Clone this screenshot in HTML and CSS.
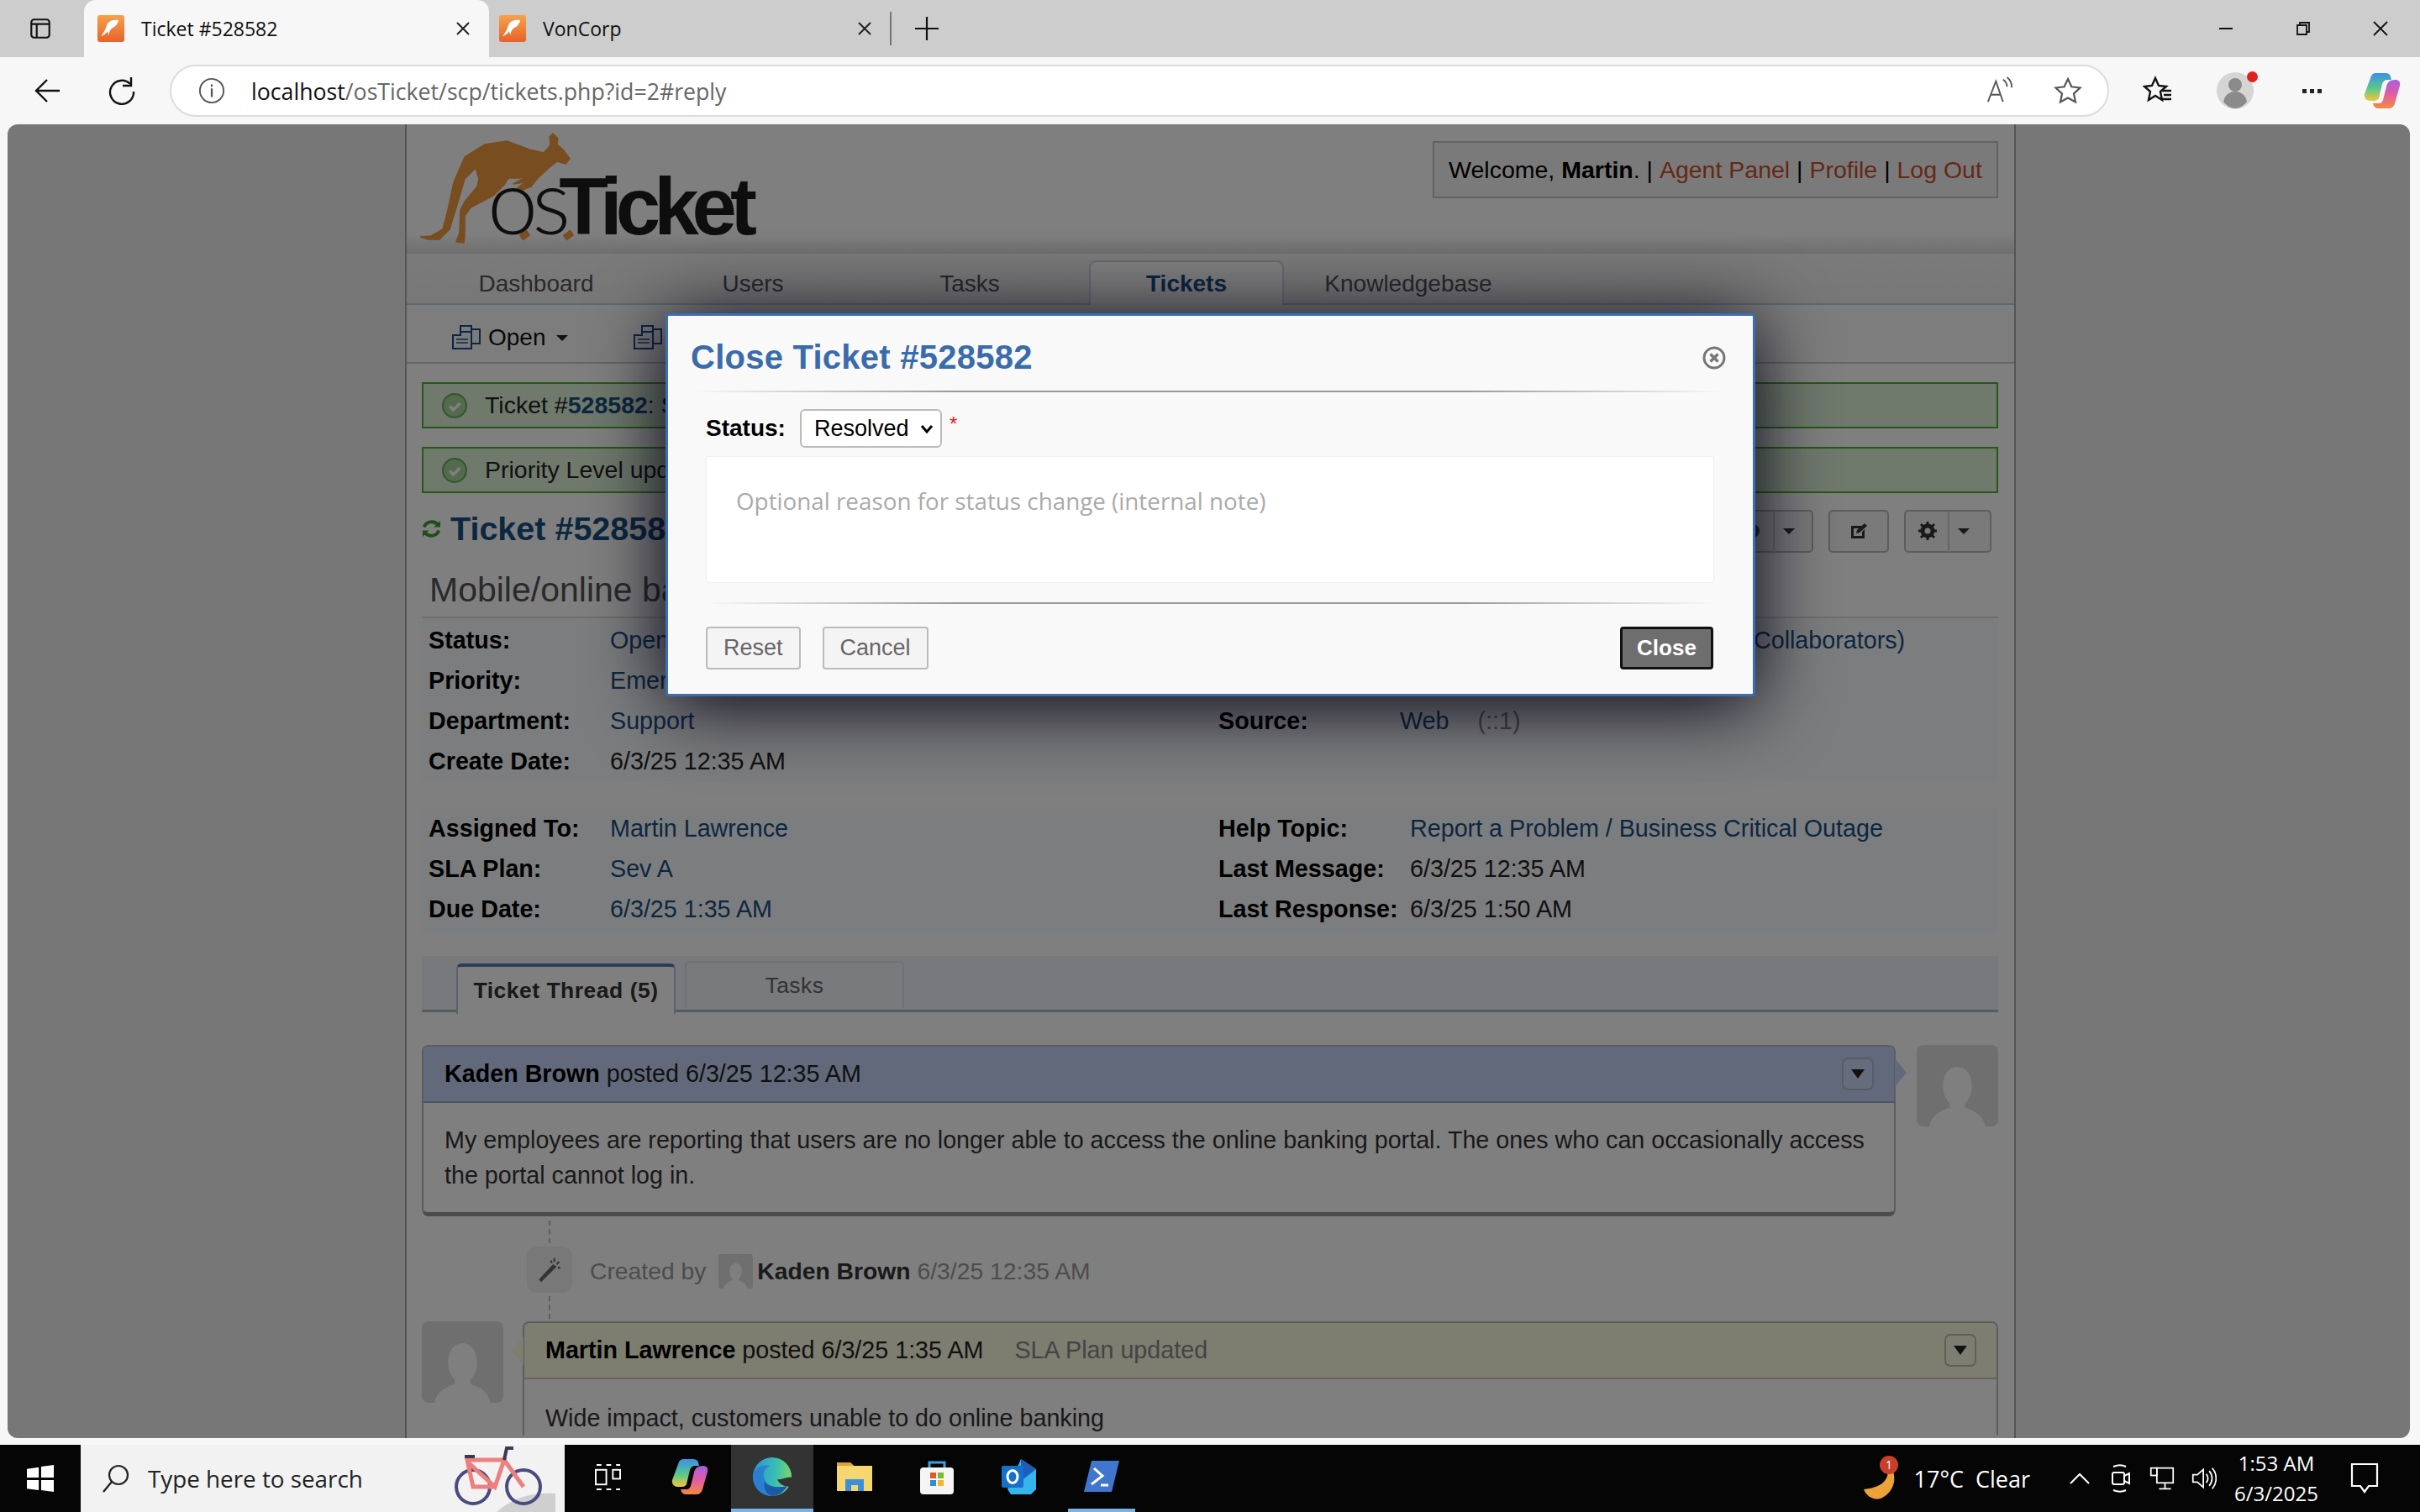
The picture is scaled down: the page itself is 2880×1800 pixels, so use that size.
FILE: index.html
```html
<!doctype html>
<html lang="en">
<head>
    <meta charset="utf-8">
    <title>Ticket #528582</title>
    <link rel="stylesheet" href="styles.css">
</head>
<body>
<svg width="0" height="0" class="defs">
    <defs>
        <linearGradient id="fav-grad" x1="0" y1="0" x2="0" y2="1"><stop offset="0" stop-color="#f5a24c"/><stop offset="1" stop-color="#e6622b"/></linearGradient>
        <linearGradient id="copilot-a" x1="0" y1="0" x2="0" y2="1"><stop offset="0" stop-color="#3a8fe8"/><stop offset=".55" stop-color="#58c98a"/><stop offset="1" stop-color="#f4c53c"/></linearGradient>
        <linearGradient id="copilot-b" x1="0" y1="0" x2="0" y2="1"><stop offset="0" stop-color="#a65fe0"/><stop offset=".5" stop-color="#e25ca6"/><stop offset="1" stop-color="#f48a3c"/></linearGradient>
        <linearGradient id="edge-grad" x1="0" y1=".4" x2="1" y2=".5"><stop offset="0" stop-color="#2b95d6"/><stop offset=".6" stop-color="#3cc0b0"/><stop offset="1" stop-color="#7dd765"/></linearGradient>
        <symbol id="favicon" viewBox="0 0 32 32">
            <rect width="32" height="32" rx="3" fill="url(#fav-grad)"/>
            <path d="M25 6c-5-1-10 0-13 4-2 4-3 10-8 15 4-1 6-3 8-6l1 5c1-4 2-7 5-9 2-1 4-2 5-4 1-2 2-3 2-5z" fill="#fff"/>
        </symbol>
        <symbol id="copilot" viewBox="0 0 44 44">
            <path d="M14 1h12c3 0 5 1 6 4l1 4h-5c-3 0-5 2-6 5l-4 17c-1 2-3 3-5 3H7C3 34 0 30 1 26L8 7c1-4 3-6 6-6z" fill="url(#copilot-a)"/>
            <path d="M38 9c4 0 6 3 5 7l-6 21c-1 4-4 6-7 6H17c-3 0-5-2-6-6h7c3 0 4-2 5-4l4-16c1-5 4-8 11-8z" fill="url(#copilot-b)"/>
        </symbol>
        <symbol id="tab-x" viewBox="0 0 20 20"><path d="M3 3l14 14M17 3L3 17" stroke="#222" stroke-width="2" fill="none"/></symbol>
        <symbol id="doc-stack" viewBox="0 0 34 30">
            <path d="M10 8h13v20H1V12h9zM10 8V1h13v7M23 5h10v17H23" fill="#f4f7fa" stroke="#1d4f82" stroke-width="2"/>
            <path d="M5 17h14M5 21h14" stroke="#1d4f82" stroke-width="1.5"/>
        </symbol>
        <symbol id="check-round" viewBox="0 0 30 30">
            <circle cx="15" cy="15" r="14" fill="#a7d59b" stroke="#62ad55" stroke-width="2"/>
            <path d="M9 15.5l4.500 4.500 8-8" fill="none" stroke="#fff" stroke-width="3.500"/>
        </symbol>
        <symbol id="person" viewBox="0 0 96 96">
            <rect width="96" height="96" rx="8" fill="#dedede"/>
            <path d="M48 26c-11 0-17 10-17 23 0 9 4 16 8 20v5c-10 3-21 8-24 22h66c-3-14-14-19-24-22v-5c4-4 8-11 8-20 0-13-6-23-17-23z" fill="#fff"/>
        </symbol>
    </defs>
</svg>

<div class="screen">
    <div class="tab-strip">
        <svg class="sidebar-icon" viewBox="0 0 28 28"><rect x="4" y="4" width="20" height="20" rx="3" fill="none" stroke="#111" stroke-width="2"/><path d="M4 9h20M10 9v15" stroke="#111" stroke-width="2"/></svg>
        <div class="tab tab-active">
            <svg class="favicon"><use href="#favicon"/></svg>
            <span class="tab-title">Ticket #528582</span>
            <svg class="tab-close"><use href="#tab-x"/></svg>
        </div>
        <div class="tab">
            <svg class="favicon"><use href="#favicon"/></svg>
            <span class="tab-title">VonCorp</span>
            <svg class="tab-close"><use href="#tab-x"/></svg>
        </div>
        <div class="tab-divider"></div>
        <svg class="new-tab" viewBox="0 0 30 30"><path d="M15 1v28M1 15h28" stroke="#111" stroke-width="2.200"/></svg>
        <div class="window-controls">
            <svg viewBox="0 0 20 20"><path d="M2 10h16" stroke="#111" stroke-width="2"/></svg>
            <svg viewBox="0 0 20 20"><path d="M3 6h11v11H3zM6 6V3h11v11h-3" fill="none" stroke="#111" stroke-width="1.800"/></svg>
            <svg viewBox="0 0 20 20"><path d="M2 2l16 16M18 2L2 18" stroke="#111" stroke-width="1.800"/></svg>
        </div>
    </div>

    <div class="toolbar">
        <svg class="back-icon" viewBox="0 0 34 34"><path d="M31 17H4M16 4L3 17l13 13" fill="none" stroke="#111" stroke-width="2.400"/></svg>
        <svg class="reload-icon" viewBox="0 0 34 34"><path d="M27 9a14 14 0 1 0 4 9" fill="none" stroke="#111" stroke-width="2.400"/><path d="M28 1v10H18" fill="none" stroke="#111" stroke-width="2.400"/></svg>
        <div class="address-bar">
            <svg class="info-icon" viewBox="0 0 34 34"><circle cx="17" cy="17" r="15" fill="none" stroke="#555" stroke-width="2"/><path d="M17 14v11M17 9v3" stroke="#555" stroke-width="2.400"/></svg>
            <span class="url"><b>localhost</b>/osTicket/scp/tickets.php?id=2#reply</span>
            <svg class="read-icon" viewBox="0 0 36 36"><path d="M3 32L13 6l9 26M7 23h12" fill="none" stroke="#555" stroke-width="2"/><path d="M22 4c3 2 5 5 5 9M27 1c4 3 6 8 6 13" fill="none" stroke="#555" stroke-width="2"/></svg>
            <svg class="star-icon" viewBox="0 0 34 34"><path d="M17 3l4.300 9.300 10.200 1.200-7.500 7 2 10L17 25.500 8 30.500l2-10-7.500-7 10.200-1.200z" fill="none" stroke="#555" stroke-width="2.200"/></svg>
        </div>
        <svg class="fav-list" viewBox="0 0 36 36"><path d="M15 3l4 9 9 1-7 6 2 10-8-5-8 5 2-10-7-6 9-1z" fill="none" stroke="#111" stroke-width="2.400"/><path d="M23 18h11M25 23h9M23 28h11" stroke="#111" stroke-width="2.400"/></svg>
        <div class="profile">
            <svg viewBox="0 0 46 46"><circle cx="23" cy="23" r="22" fill="#d5d5d5"/><circle cx="23" cy="16" r="8" fill="#8a8a8a"/><path d="M9 36c2-9 8-12 14-12s12 3 14 12c-4 5-9 8-14 8s-10-3-14-8z" fill="#8a8a8a"/></svg>
            <span class="profile-dot"></span>
        </div>
        <div class="more-dots"><i></i><i></i><i></i></div>
        <svg class="copilot-small"><use href="#copilot"/></svg>
    </div>

    <div class="viewport">
        <div class="page-panel">
            <div class="header-panel">
                <div class="logo">
                    <svg class="kangaroo" viewBox="0 0 180 136"><path d="M158 1L164 7 163 14 170 20 178 31 173 37 163 34 153 42 140 54 132 64 122 68 114 68 118 64 127 57 118 60 111 61 120 56 128 52 118 54 105 54 100 62 87 75 60 89 53 99 53 122 52 131 43 130 47 119 48 92 53 82 68 64 70 55 66 42 53 55 43 89 35 115 23 127 10 127 0 124 13 123 27 115 33 92 40 59 53 29 77 14 103 10 130 20 147 24 155 15 154 5Z" fill="#f19a3e" stroke="#f19a3e" stroke-width="1.500" stroke-linejoin="round"/></svg>
                    <span class="logo-text"><span class="logo-os">os</span><b>Ticket</b></span>
                    <i class="logo-mark logo-mark-o"></i>
                    <i class="logo-mark logo-mark-s"></i>
                </div>
                <div class="welcome-box">Welcome, <b>Martin</b>. | <a>Agent Panel</a> | <a>Profile</a> | <a>Log Out</a></div>
            </div>

            <div class="nav-panel">
                <a class="nav-item">Dashboard</a>
                <a class="nav-item">Users</a>
                <a class="nav-item">Tasks</a>
                <a class="nav-item nav-active">Tickets</a>
                <a class="nav-item nav-wide">Knowledgebase</a>
            </div>

            <div class="subnav-panel">
                <span class="subnav-item"><svg class="doc-icon"><use href="#doc-stack"/></svg>Open<i class="caret"></i></span>
                <span class="subnav-item"><svg class="doc-icon"><use href="#doc-stack"/></svg>My Tickets<i class="caret"></i></span>
            </div>

            <div class="content-panel">
                <div class="alert"><svg class="check-icon"><use href="#check-round"/></svg><span>Ticket #<b>528582</b>: Status changed</span></div>
                <div class="alert"><svg class="check-icon"><use href="#check-round"/></svg><span>Priority Level updated successfully</span></div>

                <div class="title-row">
                    <svg class="refresh-icon" viewBox="0 0 24 24"><path d="M3 10C5 3 15 1 20 7M21 14c-2 7-12 9-17 3" fill="none" stroke="#3c9a2a" stroke-width="4"/><path d="M23 2v8h-8zM1 22v-8h8z" fill="#3c9a2a"/></svg>
                    <h1 class="ticket-title">Ticket #528582</h1>
                    <div class="action-buttons">
                        <span class="action-btn action-split"><svg viewBox="0 0 24 24"><circle cx="12" cy="12" r="8" fill="#555"/></svg><i class="action-sep"></i><i class="caret"></i></span>
                        <span class="action-btn action-edit"><svg viewBox="0 0 24 24"><path d="M3 6h12v3H6v9h10v-5l3-3v11H3z" fill="#333"/><path d="M9 15l1-4 9-8 3 3-9 8z" fill="#333"/></svg></span>
                        <span class="action-btn action-gear"><svg viewBox="0 0 24 24"><circle cx="12" cy="12" r="6" fill="none" stroke="#333" stroke-width="5"/><path d="M12 1v5M12 18v5M1 12h5M18 12h5M4 4l4 4M16 16l4 4M20 4l-4 4M8 16l-4 4" stroke="#333" stroke-width="3"/></svg><i class="action-sep"></i><i class="caret"></i></span>
                    </div>
                </div>
                <h2 class="subject">Mobile/online banking down</h2>

                <div class="info-group info-first">
                    <div class="info-column">
                        <div class="info-row"><b>Status:</b><a>Open</a></div>
                        <div class="info-row"><b>Priority:</b><a>Emergency</a></div>
                        <div class="info-row"><b>Department:</b><a>Support</a></div>
                        <div class="info-row"><b>Create Date:</b><span>6/3/25 12:35 AM</span></div>
                    </div>
                    <div class="info-column">
                        <div class="info-row"><b>User:</b><a>Kaden Brown&nbsp;&nbsp;&nbsp;&nbsp;(1 User, 0 Active Collaborators)</a></div>
                        <div class="info-row"><b>Email:</b><span>kaden.brown@voncorp.com</span></div>
                        <div class="info-row"><b>Source:</b><a>Web</a><span class="source-ip">(::1)</span></div>
                    </div>
                </div>

                <div class="info-group info-second">
                    <div class="info-column">
                        <div class="info-row"><b>Assigned To:</b><a>Martin Lawrence</a></div>
                        <div class="info-row"><b>SLA Plan:</b><a>Sev A</a></div>
                        <div class="info-row"><b>Due Date:</b><a>6/3/25 1:35 AM</a></div>
                    </div>
                    <div class="info-column">
                        <div class="info-row"><b>Help Topic:</b><a>Report a Problem / Business Critical Outage</a></div>
                        <div class="info-row"><b>Last Message:</b><span>6/3/25 12:35 AM</span></div>
                        <div class="info-row"><b>Last Response:</b><span>6/3/25 1:50 AM</span></div>
                    </div>
                </div>

                <div class="tabs-panel">
                    <div class="thread-tab thread-tab-active">Ticket Thread (5)</div>
                    <div class="thread-tab">Tasks</div>
                </div>

                <div class="thread-entry">
                    <div class="entry-box entry-message">
                        <div class="entry-header"><span><b>Kaden Brown</b> posted 6/3/25 12:35 AM</span><span class="entry-menu"><i></i></span></div>
                        <div class="entry-body">My employees are reporting that users are no longer able to access the online banking portal. The ones who can occasionally access the portal cannot log in.</div>
                    </div>
                    <svg class="avatar"><use href="#person"/></svg>
                </div>

                <div class="event-row">
                    <div class="event-rail">
                        <i class="rail-dots"></i>
                        <span class="event-icon"><svg viewBox="0 0 24 24"><path d="M5 22l-2-2L15 7l3 2z" fill="#666"/><path d="M16 2v3M20 5l-2 2M13 4l1 2M21 10h-2" stroke="#666" stroke-width="1.500"/></svg></span>
                        <i class="rail-dots"></i>
                    </div>
                    <div class="event-text">Created by <svg class="mini-avatar"><use href="#person"/></svg><b>Kaden Brown</b> 6/3/25 12:35 AM</div>
                </div>

                <div class="thread-entry">
                    <svg class="avatar"><use href="#person"/></svg>
                    <div class="entry-box entry-response">
                        <div class="entry-header"><span><b>Martin Lawrence</b> posted 6/3/25 1:35 AM <span class="entry-note">SLA Plan updated</span></span><span class="entry-menu"><i></i></span></div>
                        <div class="entry-body">Wide impact, customers unable to do online banking</div>
                    </div>
                </div>
            </div>
        </div>

        <div class="overlay"></div>
        <div class="modal">
            <div class="modal-head">
                <h3>Close Ticket #528582</h3>
                <svg class="modal-close" viewBox="0 0 30 30"><circle cx="15" cy="15" r="12" fill="none" stroke="#777" stroke-width="3"/><path d="M10.500 10.500l9 9M19.500 10.500l-9 9" stroke="#777" stroke-width="3.500"/></svg>
            </div>
            <div class="fade-rule"></div>
            <div class="modal-body">
                <div class="status-row">
                    <label>Status:</label>
                    <div class="select-wrap">
                        <select class="status-select"><option>Resolved</option></select>
                        <svg class="select-chevron" viewBox="0 0 16 12"><path d="M2 2l6 7 6-7" fill="none" stroke="#000" stroke-width="3"/></svg>
                    </div>
                    <span class="required">*</span>
                </div>
                <textarea class="reason-box" placeholder="Optional reason for status change (internal note)"></textarea>
                <div class="fade-rule rule-second"></div>
                <div class="modal-buttons">
                    <button type="button" class="btn">Reset</button>
                    <button type="button" class="btn">Cancel</button>
                    <button type="button" class="btn btn-primary">Close</button>
                </div>
            </div>
        </div>
    </div>

    <div class="bottom-gap"></div>

    <div class="taskbar">
        <svg class="start-icon" viewBox="0 0 34 34"><path d="M0 5l15-2v13H0zM18 2l16-2v16H18zM0 19h15v13L0 30zM18 19h16v15l-16-2z" fill="#fff"/></svg>
        <div class="search-box">
            <svg class="search-icon" viewBox="0 0 36 36"><circle cx="21" cy="14" r="11" fill="none" stroke="#222" stroke-width="2.200"/><path d="M13 22L3 34" stroke="#222" stroke-width="2.400"/></svg>
            <span>Type here to search</span>
            <svg class="bike" viewBox="0 0 130 80">
                <path d="M60 80C80 62 105 56 130 58v22z" fill="#cfcfcf"/>
                <circle cx="32" cy="50" r="20" fill="none" stroke="#4a4a80" stroke-width="4"/>
                <circle cx="92" cy="50" r="20" fill="none" stroke="#4a4a80" stroke-width="4"/>
                <path d="M32 50L25 18h44L58 50zM25 20l33 30 11-32 23 32" fill="none" stroke="#ee7f7f" stroke-width="5"/>
                <path d="M69 18l3-14h8M22 14h12" fill="none" stroke="#3a3a55" stroke-width="4"/>
            </svg>
        </div>
        <div class="task-icons">
            <span class="task-slot"><svg class="task-view" viewBox="0 0 34 32"><path d="M3 1h6M15 1h6M27 1h5M3 31h6M15 31h6M27 31h5" stroke="#fff" stroke-width="2"/><rect x="2" y="7" width="13" height="18" fill="none" stroke="#fff" stroke-width="2"/><rect x="23" y="7" width="9" height="11" fill="none" stroke="#fff" stroke-width="2"/></svg></span>
            <span class="task-slot"><svg><use href="#copilot"/></svg></span>
            <span class="task-slot task-running"><svg class="edge-icon" viewBox="0 0 48 48"><circle cx="24" cy="24" r="23" fill="url(#edge-grad)"/><path d="M48 25C42 23 37 28 30 27 32 32 36 36 48 36z" fill="#333"/><path d="M1 24C2 14 12 9 21 11 14 14 12 21 15 28 18 36 30 38 42 35 37 43 30 47 24 47 11 47 1 37 1 24Z" fill="#2a7fd0"/><path d="M15 29C18 36 30 38 42 35 37 43 30 47 24 47 17 45 13 37 15 29Z" fill="#1b5aa4"/></svg></span>
            <span class="task-slot"><svg viewBox="0 0 44 44"><path d="M1 5h16l4 4h22v30H1z" fill="#f6d66f"/><path d="M1 5h16l4 4H1z" fill="#d9a53a"/><path d="M11 39V25h22v14h-7v-7h-8v7z" fill="#3d8fd8"/></svg></span>
            <span class="task-slot"><svg viewBox="0 0 44 44"><path d="M13 12V5h18v7" fill="none" stroke="#3aa0e0" stroke-width="3"/><rect x="2" y="11" width="40" height="32" rx="4" fill="#f5f5f5"/><rect x="14" y="17" width="7" height="7" fill="#e8552b"/><rect x="23" y="17" width="7" height="7" fill="#7db93a"/><rect x="14" y="26" width="7" height="7" fill="#2f8ed8"/><rect x="23" y="26" width="7" height="7" fill="#f2b632"/></svg></span>
            <span class="task-slot"><svg viewBox="0 0 44 44"><path d="M24 1l18 12v24l-6 6H12l-4-6z" fill="#35b5ec"/><path d="M24 1l18 12-18 14z" fill="#1c5fb8"/><rect x="1" y="9" width="26" height="26" rx="2" fill="#1670c8"/><ellipse cx="14" cy="22" rx="6" ry="7.500" fill="none" stroke="#fff" stroke-width="3"/></svg></span>
            <span class="task-slot task-open"><svg viewBox="0 0 44 44"><path d="M10 3h33l-9 37H1z" fill="#3f76cf"/><path d="M13 12l10 9-13 10" fill="none" stroke="#fff" stroke-width="3"/><path d="M21 32h9" stroke="#fff" stroke-width="3"/></svg></span>
        </div>
        <div class="tray">
            <svg class="weather-icon" viewBox="0 0 44 54"><path d="M30 12c4 16-6 26-28 28 4 10 14 14 22 10 12-6 18-20 12-34z" fill="#eca238"/><circle cx="32" cy="11" r="11" fill="#c8402a"/><text x="32" y="16" class="weather-badge">1</text></svg>
            <span class="weather-text">17°C&nbsp; Clear</span>
            <svg class="tray-chevron" viewBox="0 0 26 16"><path d="M2 14L13 3l11 11" fill="none" stroke="#fff" stroke-width="2"/></svg>
            <svg class="tray-icon" viewBox="0 0 26 34"><path d="M5 3c5-2 11-2 15 0M5 31c5 2 11 2 15 0" fill="none" stroke="#fff" stroke-width="2"/><rect x="4" y="10" width="14" height="14" rx="2" fill="none" stroke="#fff" stroke-width="2"/><path d="M18 14l6-3v12l-6-3" fill="none" stroke="#fff" stroke-width="2"/></svg>
            <svg class="tray-icon" viewBox="0 0 34 34"><rect x="10" y="3" width="22" height="20" fill="none" stroke="#fff" stroke-width="2"/><rect x="2" y="3" width="8" height="10" fill="#000" stroke="#fff" stroke-width="2"/><path d="M21 23v7M13 31h16" stroke="#fff" stroke-width="2"/></svg>
            <svg class="tray-icon" viewBox="0 0 34 34"><path d="M2 12h6l8-7v24l-8-7H2z" fill="none" stroke="#fff" stroke-width="2"/><path d="M20 11c3 4 3 8 0 12M24 7c5 6 5 14 0 20M28 3c7 8 7 20 0 28" fill="none" stroke="#fff" stroke-width="2"/></svg>
            <div class="clock"><span>1:53 AM</span><span>6/3/2025</span></div>
            <svg class="notify-icon" viewBox="0 0 34 38"><path d="M2 2h30v26H22l-5 7-5-7H2z" fill="none" stroke="#fff" stroke-width="2.200"/></svg>
        </div>
    </div>
</div>
</body>
</html>
```

FILE: styles.css
```css
* {
    box-sizing: border-box;
}
html, body {
    margin: 0;
    padding: 0;
    background-color: #000;
}
.defs {
    display: block;
    height: 0;
}
.screen {
    width: 2880px;
    height: 1800px;
    display: flex;
    flex-direction: column;
    font-family: "Liberation Sans", Arial, sans-serif;
    background-color: #f7f7f7;
    overflow: hidden;
}

/* browser tabs */
.tab-strip {
    height: 68px;
    flex: none;
    display: flex;
    align-items: center;
    background-color: #cdcdcd;
    font-family: "Open Sans", sans-serif;
    font-size: 23px;
    color: #111;
}
.sidebar-icon {
    width: 30px;
    height: 30px;
    margin: 0 37px 0 33px;
    flex: none;
}
.tab {
    width: 482px;
    height: 68px;
    display: flex;
    align-items: center;
    padding: 0 25px 0 12px;
}
.tab-active {
    background-color: #f7f7f7;
    border-radius: 14px 14px 0 0;
    padding: 0 21px 0 16px;
}
.favicon {
    width: 32px;
    height: 32px;
    flex: none;
    margin-right: 20px;
}
.tab-title {
    flex: 1;
}
.tab-close {
    width: 20px;
    height: 20px;
    flex: none;
}
.tab-divider {
    width: 2px;
    height: 40px;
    background-color: #777;
    margin-left: -5px;
}
.new-tab {
    width: 30px;
    height: 30px;
    margin-left: 27px;
}
.window-controls {
    margin-left: auto;
    display: flex;
    gap: 72px;
    padding-right: 37px;
}
.window-controls svg {
    width: 20px;
    height: 20px;
}

/* address bar row */
.toolbar {
    height: 80px;
    flex: none;
    display: flex;
    align-items: center;
    background-color: #f7f7f7;
}
.back-icon {
    width: 34px;
    height: 34px;
    margin-left: 40px;
}
.reload-icon {
    width: 34px;
    height: 34px;
    margin-left: 54px;
}
.address-bar {
    width: 2308px;
    height: 62px;
    margin-left: 40px;
    display: flex;
    align-items: center;
    background-color: #fff;
    border: 2px solid #dcdcdc;
    border-radius: 31px;
    padding: 0 30px 0 32px;
}
.info-icon {
    width: 32px;
    height: 32px;
    margin-right: 31px;
}
.url {
    flex: 1;
    font-family: "Open Sans", sans-serif;
    font-size: 26.700px;
    color: #666;
}
.url b {
    font-weight: 400;
    color: #111;
}
.read-icon {
    width: 34px;
    height: 34px;
    margin-right: 47px;
}
.star-icon {
    width: 34px;
    height: 34px;
}
.fav-list {
    width: 36px;
    height: 36px;
    margin-left: 40px;
}
.profile {
    position: relative;
    width: 46px;
    height: 46px;
    margin-left: 51px;
}
.profile svg {
    width: 46px;
    height: 46px;
    display: block;
}
.profile-dot {
    position: absolute;
    top: 0;
    right: -4px;
    width: 13px;
    height: 13px;
    border-radius: 50%;
    background-color: #e0201c;
}
.more-dots {
    display: flex;
    gap: 4px;
    margin-left: 57px;
}
.more-dots i {
    width: 5px;
    height: 5px;
    background-color: #222;
}
.copilot-small {
    width: 44px;
    height: 44px;
    margin-left: 50px;
}

/* the page inside the browser */
.viewport {
    position: relative;
    height: 1564px;
    flex: none;
    margin: 0 12px 0 9px;
    background-color: #eee;
    border-radius: 12px;
    overflow: hidden;
}
.page-panel {
    width: 1917px;
    height: 100%;
    margin-left: 473px;
    background-color: #fff;
    border-left: 2px solid #aaa;
    border-right: 2px solid #aaa;
    color: #000;
    font-size: 28.700px;
    overflow: hidden;
}
.header-panel {
    height: 154px;
    display: flex;
    justify-content: space-between;
    padding: 0 19px 0 16px;
    background: linear-gradient(#fff 85%, #ddd);
}
.logo {
    position: relative;
    display: flex;
    align-items: flex-end;
    padding-top: 10px;
    height: 146px;
}
.kangaroo {
    width: 180px;
    height: 136px;
    flex: none;
}
.logo-text {
    display: flex;
    align-items: baseline;
    margin-left: -100px;
    font-size: 96px;
    line-height: 96px;
    letter-spacing: -8px;
    color: #1c1c1c;
}
.logo-os {
    font-family: Lato, "Liberation Sans", sans-serif;
    font-size: 108px;
    font-weight: 300;
    letter-spacing: -7px;
    margin-right: -7px;
}
.logo-mark {
    position: absolute;
    top: 128px;
    width: 11px;
    height: 8px;
    background-color: #f19a3e;
    transform: rotate(-35deg);
}
.logo-mark-o {
    left: 119px;
}
.logo-mark-s {
    left: 171px;
}
.welcome-box {
    width: 673px;
    height: 68px;
    margin-top: 20px;
    display: flex;
    align-items: center;
    justify-content: center;
    white-space: pre;
    background-color: #f4f4f4;
    border: 2px solid #c4c4c4;
    font-size: 28.500px;
}
.welcome-box a {
    color: #c9512c;
}
.nav-panel {
    height: 61px;
    display: flex;
    gap: 26px;
    padding-left: 38px;
    background: linear-gradient(#f6f6f6, #efefef);
    border-bottom: 2px solid #bcd0e6;
}
.nav-item {
    width: 232px;
    display: flex;
    align-items: center;
    justify-content: center;
    padding-top: 12px;
    font-size: 28px;
    color: #555;
}
.nav-active {
    margin-top: 8px;
    margin-bottom: -2px;
    padding-top: 0;
    background-color: #fff;
    border: 2px solid #c8d6e6;
    border-bottom: none;
    border-radius: 8px 8px 0 0;
    font-weight: 700;
    color: #184e81;
}
.nav-wide {
    width: 244px;
}
.subnav-panel {
    height: 70px;
    display: flex;
    align-items: center;
    gap: 78px;
    padding: 10px 0 0 54px;
    border-bottom: 2px solid #ccc;
    background-color: #fbfbfb;
}
.subnav-item {
    display: flex;
    align-items: center;
    font-size: 28px;
    color: #111;
}
.doc-icon {
    width: 34px;
    height: 30px;
    margin-right: 9px;
}
.caret {
    display: inline-block;
    width: 0;
    height: 0;
    margin-left: 12px;
    border-left: 7px solid transparent;
    border-right: 7px solid transparent;
    border-top: 7px solid #222;
}
.content-panel {
    padding: 0 19px 0 18px;
}
.alert {
    height: 55px;
    margin-top: 22px;
    display: flex;
    align-items: center;
    padding-left: 22px;
    background-color: #dff2d9;
    border: 2px solid #4fb02f;
    font-size: 28.500px;
    color: #222;
}
.alert b {
    color: #184e81;
}
.check-icon {
    width: 30px;
    height: 30px;
    margin-right: 21px;
}
.title-row {
    height: 78px;
    margin-top: 8px;
    padding-bottom: 10px;
    display: flex;
    align-items: center;
}
.refresh-icon {
    width: 23px;
    height: 23px;
    margin-right: 11px;
}
.ticket-title {
    margin: 0;
    font-size: 39.500px;
    font-weight: 700;
    color: #184e81;
}
.action-buttons {
    margin: 6px 8px 0 auto;
    display: flex;
    gap: 18px;
}
.action-btn {
    height: 51px;
    display: flex;
    align-items: center;
    padding: 0 14px;
    background-color: #f4f4f4;
    border: 2px solid #bbb;
    border-radius: 5px;
}
.action-btn svg {
    width: 24px;
    height: 24px;
}
.action-btn .caret {
    margin-left: 10px;
    border-top-color: #333;
}
.action-sep {
    width: 2px;
    height: 49px;
    margin-left: 12px;
    background-color: #ccc;
}
.action-split {
    width: 100px;
}
.action-edit {
    width: 72px;
    justify-content: center;
}
.action-gear {
    width: 104px;
}
.subject {
    height: 63px;
    margin: 0;
    padding: 0 0 0 9px;
    line-height: 58px;
    font-size: 41px;
    font-weight: 400;
    color: #555;
    border-bottom: 2px solid #ddd;
}
.info-group {
    display: grid;
    grid-template-columns: 940px 1fr;
    padding-left: 8px;
    background-color: #f9fbfc;
}
.info-first {
    padding-top: 2px;
}
.info-second {
    margin-top: 32px;
    padding-bottom: 4px;
}
.info-row {
    height: 48px;
    display: flex;
    align-items: center;
    white-space: nowrap;
    color: #222;
}
.info-row b {
    width: 216px;
    flex: none;
    color: #000;
}
.info-second .info-column + .info-column b {
    width: 228px;
}
.info-row a {
    color: #184e81;
}
.source-ip {
    margin-left: 34px;
    color: #888;
}
.tabs-panel {
    height: 67px;
    margin-top: 28px;
    display: flex;
    padding-left: 41px;
    gap: 11px;
    background-color: #eef3f9;
    border-bottom: 3px solid #aeb4bc;
}
.thread-tab {
    width: 261px;
    height: 56px;
    margin-top: 6px;
    display: flex;
    align-items: center;
    justify-content: center;
    background-color: #f1f4f8;
    border: 2px solid #dde4ec;
    border-bottom: none;
    border-radius: 6px 6px 0 0;
    font-size: 26.500px;
    letter-spacing: .5px;
    color: #666;
}
.thread-tab-active {
    height: 60px;
    margin-top: 9px;
    margin-bottom: -3px;
    background-color: #fff;
    border: 2px solid #b8c4d2;
    border-top: 4px solid #5278b0;
    border-bottom: none;
    font-weight: 700;
    color: #333;
}
.thread-entry {
    margin-top: 39px;
    display: flex;
    gap: 25px;
    align-items: flex-start;
}
.event-row + .thread-entry {
    margin-top: 0;
}
.avatar {
    width: 97px;
    height: 97px;
    flex: none;
}
.entry-box {
    position: relative;
    background-color: #fff;
    border: 2px solid #bbb;
}
.entry-message {
    width: 1755px;
    height: 204px;
    border-bottom: 5px solid #999;
    border-radius: 8px;
}
.entry-response {
    flex: 1;
    margin-left: -2px;
    border-radius: 8px 8px 0 0;
    border-bottom: none;
}
.entry-header {
    height: 67px;
    display: flex;
    align-items: center;
    justify-content: space-between;
    padding: 0 24px 0 25px;
    border-radius: 6px 6px 0 0;
    border-bottom: 2px solid #9aa8c4;
    font-size: 28.700px;
    color: #222;
}
.entry-message .entry-header {
    background-color: #c4d3f5;
}
.entry-response .entry-header {
    background-color: #fbfbe1;
    border-bottom-color: #c8c8b0;
}
.entry-message::after {
    content: "";
    position: absolute;
    top: 14px;
    right: -15px;
    border-top: 17px solid transparent;
    border-bottom: 17px solid transparent;
    border-left: 14px solid #c4d3f5;
}
.entry-response::before {
    content: "";
    position: absolute;
    top: 16px;
    left: -15px;
    border-top: 17px solid transparent;
    border-bottom: 17px solid transparent;
    border-right: 14px solid #fbfbe1;
}
.entry-header b {
    color: #000;
}
.entry-note {
    margin-left: 29px;
    color: #888;
}
.entry-menu {
    width: 38px;
    height: 39px;
    display: flex;
    align-items: center;
    justify-content: center;
    background-color: rgba(255, 255, 255, .12);
    border: 2px solid #aeb8d0;
    border-radius: 7px;
}
.entry-response .entry-menu {
    border-color: #c0c0b0;
}
.entry-menu i {
    width: 0;
    height: 0;
    border-left: 8px solid transparent;
    border-right: 8px solid transparent;
    border-top: 11px solid #222;
}
.entry-body {
    padding: 23px 25px 0;
    line-height: 42px;
    font-size: 28.700px;
    color: #333;
}
.entry-response .entry-body {
    padding-top: 25px;
}
.event-row {
    height: 125px;
    padding-left: 125px;
    display: flex;
}
.event-rail {
    width: 54px;
    padding-top: 5px;
    display: flex;
    flex-direction: column;
    align-items: center;
    gap: 4px;
}
.rail-dots {
    height: 27px;
    border-left: 2px dashed #bbb;
}
.event-icon {
    width: 54px;
    height: 55px;
    display: flex;
    align-items: center;
    justify-content: center;
    background-color: #f0f0f0;
    border-radius: 12px;
}
.event-icon svg {
    width: 34px;
    height: 34px;
}
.event-text {
    height: 125px;
    padding: 5px 0 0 21px;
    display: flex;
    align-items: center;
    white-space: pre;
    font-size: 28.300px;
    color: #999;
}
.event-text b {
    color: #333;
}
.mini-avatar {
    width: 41px;
    height: 41px;
    margin: 0 5px 0 7px;
}
.overlay {
    position: absolute;
    inset: 0;
    background-color: rgba(0, 0, 0, .5);
}

/* close ticket dialog */
.modal {
    position: absolute;
    left: 783px;
    top: 225px;
    width: 1297px;
    height: 456px;
    background-color: #f9f9f9;
    border: 3px solid #3a6fb5;
    border-radius: 4px;
    box-shadow: 0 9px 90px #001;
}
.modal-head {
    height: 89px;
    display: flex;
    align-items: center;
    justify-content: space-between;
    padding: 10px 31px 0 27px;
}
.modal-head h3 {
    margin: 0;
    font-size: 40px;
    letter-spacing: .25px;
    color: #3a6bab;
}
.modal-close {
    width: 30px;
    height: 30px;
}
.fade-rule {
    height: 2px;
    margin: 0 34px 0 30px;
    background: linear-gradient(to right, transparent, #999 25%, #999 75%, transparent);
}
.modal-body {
    padding: 20px 47px 0 45px;
}
.status-row {
    height: 46px;
    display: flex;
    align-items: center;
    font-size: 28px;
    font-weight: 700;
}
.status-row label {
    width: 112px;
}
.select-wrap {
    position: relative;
    width: 169px;
    height: 46px;
}
.status-select {
    appearance: none;
    width: 169px;
    height: 46px;
    padding-left: 15px;
    background-color: #fff;
    border: 2px solid #bbb;
    border-radius: 6px;
    font-family: "Liberation Sans", Arial, sans-serif;
    font-size: 27px;
    color: #000;
}
.select-chevron {
    position: absolute;
    right: 10px;
    top: 18px;
    width: 16px;
    height: 12px;
}
.required {
    margin: -10px 0 0 9px;
    font-size: 24px;
    font-weight: 400;
    color: #e02020;
}
.reason-box {
    display: block;
    width: 1200px;
    height: 151px;
    margin-top: 10px;
    padding: 33px 35px;
    background-color: #fff;
    border: 1px solid #eee;
    border-radius: 3px;
    resize: none;
    outline: none;
    font-family: "Open Sans", sans-serif;
    font-size: 27.800px;
}
.reason-box::placeholder {
    color: #aaa;
    opacity: 1;
}
.rule-second {
    margin: 23px 0 0;
}
.modal-buttons {
    margin-top: 27px;
    display: flex;
    gap: 26px;
}
.btn {
    height: 51px;
    padding: 0 19px;
    background-color: #f4f4f4;
    border: 2px solid #bbb;
    border-radius: 4px;
    font-family: "Liberation Sans", Arial, sans-serif;
    font-size: 27px;
    color: #666;
}
.btn-primary {
    width: 111px;
    margin-left: auto;
    padding: 0;
    background-color: #6e6e6e;
    border: 3px solid #111;
    font-size: 26px;
    font-weight: 700;
    color: #fff;
}
.bottom-gap {
    height: 8px;
    flex: none;
    background-color: #f7f7f7;
}

/* windows taskbar */
.taskbar {
    height: 80px;
    flex: 1;
    display: flex;
    align-items: center;
    background-color: #050505;
    color: #fff;
    font-family: "Open Sans", sans-serif;
}
.start-icon {
    width: 32px;
    height: 32px;
    margin: 0 32px;
    flex: none;
}
.search-box {
    width: 576px;
    height: 80px;
    flex: none;
    display: flex;
    align-items: center;
    padding: 0 10px 0 24px;
    background-color: #f2f2f2;
    font-size: 27.800px;
    color: #222;
}
.search-icon {
    width: 36px;
    height: 36px;
    margin-right: 20px;
}
.bike {
    width: 132px;
    height: 80px;
    margin-left: auto;
}
.task-icons {
    display: flex;
    height: 80px;
    margin-left: 2px;
}
.task-slot {
    width: 98px;
    height: 80px;
    display: flex;
    align-items: center;
    justify-content: center;
    border-bottom: 4px solid transparent;
}
.task-slot svg {
    width: 44px;
    height: 44px;
}
.task-slot .task-view {
    width: 33px;
    height: 31px;
}
.task-slot .edge-icon {
    width: 48px;
    height: 48px;
}
.task-running {
    background-color: #333;
    border-bottom-color: #7ab4e6;
}
.task-open {
    border-bottom: none;
    padding-bottom: 4px;
    background: linear-gradient(#7ab4e6, #7ab4e6) center bottom / 80px 4px no-repeat;
}
.tray {
    margin-left: auto;
    display: flex;
    align-items: center;
    padding-right: 49px;
}
.weather-icon {
    width: 44px;
    height: 54px;
}
.weather-badge {
    font-size: 14px;
    fill: #fff;
    text-anchor: middle;
}
.weather-text {
    margin-left: 18px;
    font-size: 27px;
}
.tray-chevron {
    width: 26px;
    height: 16px;
    margin-left: 46px;
}
.tray-icon {
    width: 30px;
    height: 34px;
    margin-left: 20px;
}
.clock {
    width: 110px;
    margin-left: 16px;
    display: flex;
    flex-direction: column;
    align-items: center;
    gap: 8px;
    font-size: 24px;
    line-height: 28px;
}
.notify-icon {
    width: 34px;
    height: 38px;
    margin-left: 33px;
}
```
